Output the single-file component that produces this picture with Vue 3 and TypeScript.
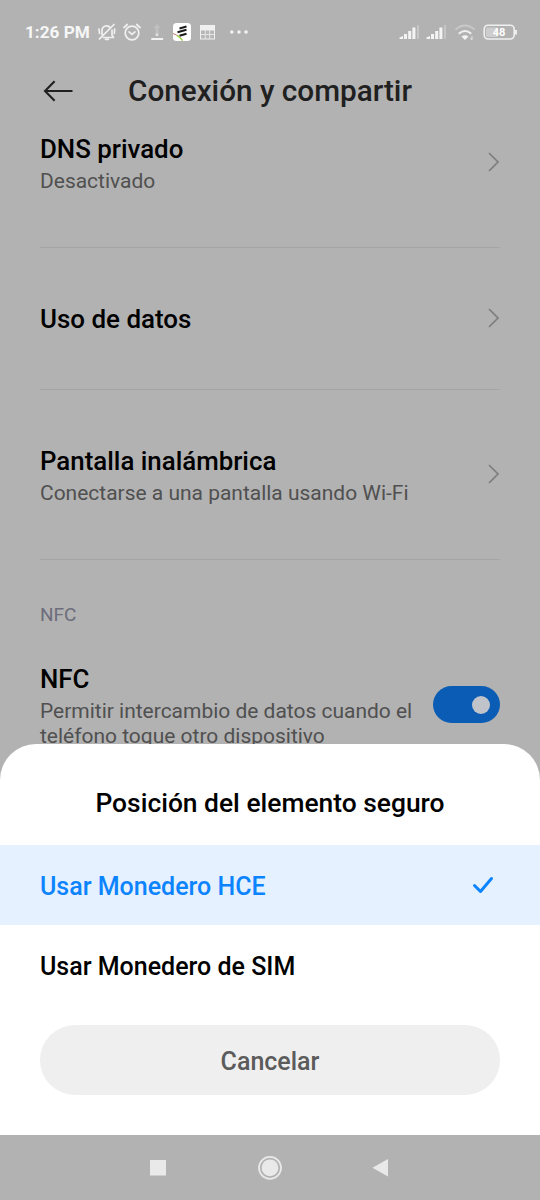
<script setup lang="ts">
import { ref } from 'vue'

interface SettingRow {
  title: string
  summary?: string
}

const rows: SettingRow[] = [
  { title: 'DNS privado', summary: 'Desactivado' },
  { title: 'Uso de datos' },
  { title: 'Pantalla inalámbrica', summary: 'Conectarse a una pantalla usando Wi-Fi' },
]

const options: string[] = ['Usar Monedero HCE', 'Usar Monedero de SIM']
const selected = ref(0)
const nfcOn = ref(true)
</script>

<template>
  <div class="phone">
    <div class="status">
      <span class="clock">1:26 PM</span>
      <svg class="icons-left" width="156" height="24" viewBox="96 20 156 24" fill="none">
        <g stroke="#f0f0f0" stroke-width="1.700" stroke-linecap="round" stroke-linejoin="round">
          <path d="M102 34.500V30.500a4.500 4.500 0 0 1 7.500-3.500M112 30v5l1.500 2.500H103.500M114 24.500L99.500 38.800M105.500 39.300h3M99 29l.5 4.500M114.700 29l-.4 4.500" />
          <circle cx="132" cy="33" r="6.800" />
          <path d="M129 31.800l3 2.600 3-2.600M124 27.500l3.300-3M140 27.500l-3.300-3" />
        </g>
        <path d="M157 24l3.500 4h-2v6h-3v-6h-2z" fill="#c0c0c0" />
        <rect x="155.700" y="33.500" width="2.600" height="2.500" fill="#e2e2e2" />
        <rect x="151.300" y="38" width="11.800" height="2" fill="#f2f2f2" />
        <rect x="173" y="23" width="18" height="18" rx="3.500" fill="#fff" />
        <path d="M179.500 28.500l7-2M177.500 32.300l9-2.500M179.500 35.800l7-2" stroke="#191919" stroke-width="2" />
        <path d="M173 33.500l5.500 2.500" stroke="#c77a6c" stroke-width="1" />
        <path d="M177 35.500q3 1 5.500 5.200" stroke="#9fd04b" stroke-width="1.500" />
        <rect x="200" y="25" width="15" height="14.500" fill="#f0f0f0" />
        <path d="M201 30.500h13v8h-13z" fill="#b7b7b7" />
        <path d="M205.300 30v9M209.700 30v9M201 34.500h13" stroke="#e5e5e5" stroke-width="1" />
        <g fill="#f2f2f2">
          <circle cx="231.800" cy="32" r="1.800" />
          <circle cx="239" cy="32" r="1.800" />
          <circle cx="246" cy="32" r="1.800" />
        </g>
      </svg>
      <svg class="icons-right" width="124" height="24" viewBox="396 20 124 24" fill="none">
        <g fill="#f4f4f4">
          <path d="M399.500 37.500l3.500-1.500V39h-3.500zM404 34h3v5H404zM408.200 31h3v8h-3zM412.400 27.500h3V39h-3z" />
          <path d="M426.500 37.500l3.500-1.500V39h-3.500zM431 34h3v5H431zM435.200 31h3v8h-3zM439.400 27.500h3V39h-3z" />
        </g>
        <path d="M417 25h2v14h-2zM444 25h2v14h-2z" fill="#c6c6c6" />
        <path d="M455.500 29.500q9.500-8 19 0" stroke="#c9c9c9" stroke-width="1.800" />
        <path d="M458.800 33.800q6.200-5.500 12.400 0" stroke="#f0f0f0" stroke-width="2" />
        <path d="M461.500 36.500q3.500-2.500 7 0l-3.500 3.500z" fill="#f4f4f4" />
        <path d="M472 36v4M470.500 38.200l1.500 1.800" stroke="#d9d9d9" stroke-width="1.200" />
        <rect x="484.200" y="25.200" width="30" height="13.800" rx="4" stroke="#f0f0f0" stroke-width="1.600" />
        <path d="M487.500 27.500h10v9.500h-10a1.500 1.500 0 0 1-1.500-1.500v-6.500a1.500 1.500 0 0 1 1.500-1.500z" fill="#cdcdcd" />
        <path d="M516 30v4.500" stroke="#ededed" stroke-width="2" />
        <text x="499" y="36.200" text-anchor="middle" class="battery">48</text>
      </svg>
    </div>

    <header class="header">
      <svg width="32" height="24" viewBox="0 0 32 24" fill="none" stroke="#202020" stroke-width="2.100">
        <path d="M12.600 2.300L3 12l9.600 9.700M3 12h27.500" />
      </svg>
      <h1>Conexión y compartir</h1>
    </header>

    <main class="list">
      <section v-for="row in rows" :key="row.title" class="row" :class="{ single: !row.summary }">
        <div class="texts">
          <div class="title">{{ row.title }}</div>
          <div v-if="row.summary" class="summary">{{ row.summary }}</div>
        </div>
        <svg class="chevron" width="13" height="20" viewBox="0 0 13 20" fill="none" stroke="#7c7c7c" stroke-width="1.600">
          <path d="M2 1l9 9-9 9" />
        </svg>
      </section>
      <div class="category">NFC</div>
      <section class="nfc">
        <div class="texts">
          <div class="title">NFC</div>
          <div class="summary">Permitir intercambio de datos cuando el<br />teléfono toque otro dispositivo</div>
        </div>
        <button class="toggle" :class="{ on: nfcOn }" @click="nfcOn = !nfcOn"><span></span></button>
      </section>
    </main>

    <div class="sheet">
      <h2>Posición del elemento seguro</h2>
      <div
        v-for="(option, i) in options"
        :key="option"
        class="option"
        :class="{ active: i === selected }"
        @click="selected = i"
      >
        <span>{{ option }}</span>
        <svg v-if="i === selected" width="22" height="18" viewBox="0 0 22 18" fill="none" stroke="#0d84ff" stroke-width="3" stroke-linecap="round" stroke-linejoin="round">
          <path d="M2.500 9.500l6 6L19.500 2.500" />
        </svg>
      </div>
      <button class="cancel">Cancelar</button>
    </div>

    <nav class="nav">
      <svg width="540" height="65" viewBox="0 0 540 65" fill="#e9e9e9">
        <rect x="150" y="25" width="16" height="15.500" />
        <circle cx="270" cy="32.800" r="8.400" />
        <circle cx="270" cy="32.800" r="11" fill="none" stroke="#e9e9e9" stroke-width="1.800" />
        <path d="M372.500 32.700L388 24v17.500z" />
      </svg>
    </nav>
  </div>
</template>

<style>
html,
body {
  background: #b2b2b2;
}
</style>

<style scoped>
.phone {
  position: relative;
  display: flex;
  flex-direction: column;
  width: 540px;
  height: 1200px;
  overflow: hidden;
  background: #b2b2b2;
  font-family: Roboto, "Liberation Sans", sans-serif;
  color: #000;
}
.status {
  display: flex;
  align-items: center;
  height: 64px;
  flex: none;
  padding: 0 20px 0 25px;
}
.clock {
  width: 71px;
  color: #f6f6f6;
  font-size: 17.200px;
  font-weight: 700;
  white-space: nowrap;
}
.icons-right {
  margin-left: auto;
}
.battery {
  fill: #fff;
  font-size: 11px;
  font-weight: 700;
}
.header {
  display: flex;
  align-items: center;
  flex: none;
  height: 54px;
  padding-left: 42px;
}
h1 {
  margin: 0 0 0 54px;
  font-size: 29.700px;
  font-weight: 500;
  line-height: 36px;
  color: #202020;
  white-space: nowrap;
}
.list {
  flex: 1;
  min-height: 0;
  overflow: hidden;
  padding: 0 40px;
}
.row {
  display: flex;
  align-items: center;
  justify-content: space-between;
  box-sizing: border-box;
  height: 170px;
  padding-bottom: 2px;
  border-bottom: 1px solid #a5a5a5;
}
.row:first-child {
  height: 130px;
  padding-bottom: 42px;
}
.row.single {
  height: 142px;
}
.title {
  font-size: 25.850px;
  font-weight: 500;
  line-height: 36px;
  white-space: nowrap;
}
.row.single .title {
  padding-top: 2px;
  font-size: 25.950px;
}
.summary {
  font-size: 20.980px;
  line-height: 24.500px;
  color: #505050;
  white-space: nowrap;
}
.row .summary {
  margin-top: 2px;
  margin-bottom: -1px;
}
.category {
  padding-top: 43px;
  font-size: 19px;
  line-height: 24px;
  color: #6c6c7c;
}
.nfc {
  display: flex;
  justify-content: space-between;
  margin-top: 35px;
}
.nfc .title {
  line-height: 35px;
}
.nfc .summary {
  margin-top: 2px;
}
.toggle {
  display: flex;
  align-items: center;
  width: 67px;
  height: 37px;
  margin-top: 24px;
  padding: 0 10px;
  border: 0;
  border-radius: 19px;
  background: #8a8a8a;
}
.toggle.on {
  justify-content: flex-end;
  background: #0a5cb5;
}
.toggle span {
  width: 18px;
  height: 18px;
  border-radius: 50%;
  background: #c0c4ca;
}
.sheet {
  position: absolute;
  left: 0;
  right: 0;
  bottom: 65px;
  height: 391px;
  border-radius: 36px 36px 0 0;
  background: #fff;
}
h2 {
  margin: 0;
  padding-top: 41px;
  height: 60px;
  font-size: 26.400px;
  font-weight: 500;
  line-height: 36px;
  text-align: center;
}
.option {
  display: flex;
  align-items: center;
  justify-content: space-between;
  height: 80px;
  padding: 0 46px 0 40px;
  font-size: 25px;
  font-weight: 500;
}
.option span {
  padding-top: 2px;
}
.option.active {
  color: #0d84ff;
  background: #e5f1ff;
}
.cancel {
  display: block;
  width: 460px;
  height: 70px;
  margin: 20px auto 0;
  padding: 4px 0 0;
  border: 0;
  border-radius: 35px;
  background: #efefef;
  color: #5b5b5b;
  font: 500 25px/66px Roboto, "Liberation Sans", sans-serif;
}
.nav {
  flex: none;
  height: 65px;
}
.nav svg {
  display: block;
}
</style>
